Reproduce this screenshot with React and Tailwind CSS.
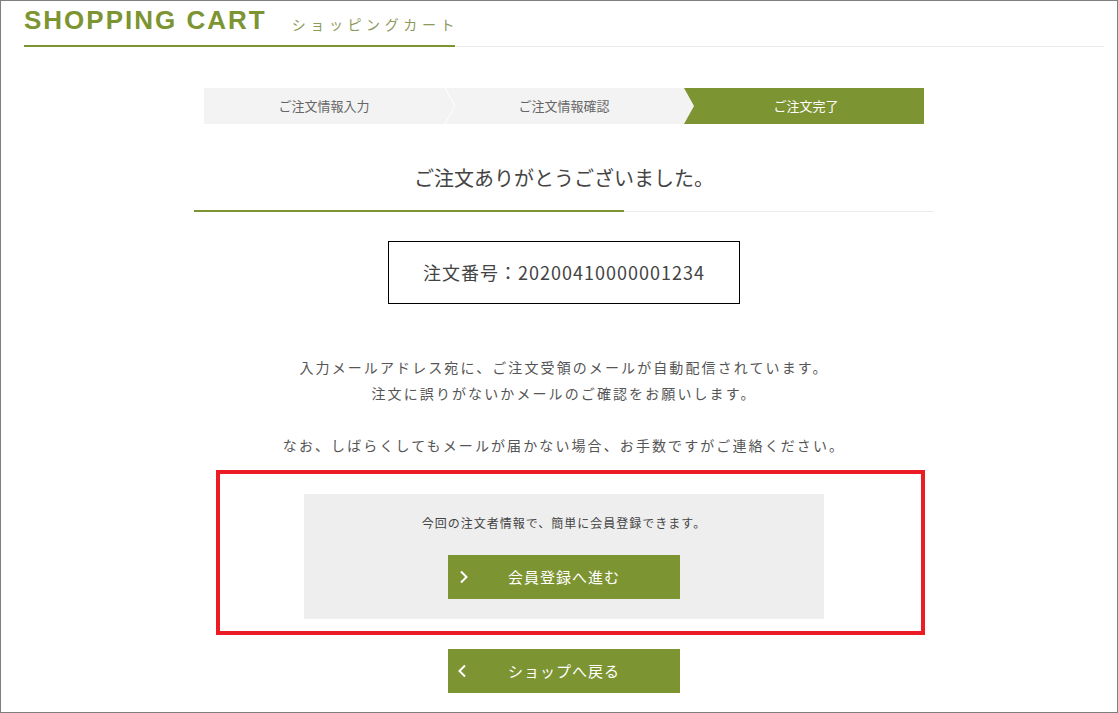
import React from "react";

const JP = { fontFamily: '"Noto Sans CJK JP", "Noto Sans", sans-serif' };

function Chevron({ dir = "right" }) {
  return (
    <svg width="10" height="14" viewBox="0 0 10 14" className="shrink-0">
      {dir === "right" ? (
        <polyline points="2,1.5 7.5,7 2,12.5" fill="none" stroke="#fff" strokeWidth="2" />
      ) : (
        <polyline points="8,1.5 2.5,7 8,12.5" fill="none" stroke="#fff" strokeWidth="2" />
      )}
    </svg>
  );
}

function GreenButton({ dir, children }) {
  return (
    <div className="relative mx-auto flex h-[44px] w-[232px] items-center justify-center bg-[#7d9433]">
      <div className={`absolute top-1/2 -translate-y-1/2 ${dir === "right" ? "left-[11px]" : "left-[9px]"}`}>
        <Chevron dir={dir} />
      </div>
      <span className="text-[15px] tracking-[1px] text-white">{children}</span>
    </div>
  );
}

export default function App() {
  return (
    <div className="h-[713px] w-[1118px] overflow-hidden border border-[#7f7f7f] bg-white" style={JP}>
      {/* Header */}
      <div className="ml-[23px] mr-[13px]">
        <div className="mt-[4px] flex h-[30px] items-center">
          <span
            className="text-[26px] font-bold leading-[30px] tracking-[2px] text-[#7d9433]"
            style={{ fontFamily: '"Liberation Sans", Arial, sans-serif' }}
          >
            SHOPPING CART
          </span>
          <span className="ml-[25px] mt-[8px] text-[14px] leading-[20px] tracking-[4.6px] text-[#8c9a5c]">ショッピングカート</span>
        </div>
        <div className="mt-[10px] flex items-end">
          <div className="h-[2px] w-[431px] bg-[#7d9433]" />
          <div className="h-px flex-1 bg-[#ebebeb]" />
        </div>
      </div>

      {/* Main column */}
      <div className="ml-[193px] w-[740px]">
        {/* Stepper */}
        <div className="relative mx-[10px] mt-[41px] flex h-[36px] bg-[#f3f3f3]">
          <div className="flex w-[240px] items-center justify-center text-[13px] text-[#666]">ご注文情報入力</div>
          <div className="flex w-[240px] items-center justify-center text-[13px] text-[#666]">ご注文情報確認</div>
          <div
            className="flex w-[240px] items-center justify-center bg-[#7d9433] pl-[4px] text-[13px] text-white"
            style={{ clipPath: "polygon(0 0, 100% 0, 100% 100%, 0 100%, 10px 50%)" }}
          >
            ご注文完了
          </div>
          <svg className="absolute left-[240px] top-0" width="14" height="36" viewBox="0 0 14 36">
            <polyline points="1,0 11,18 1,36" fill="none" stroke="#fff" strokeWidth="1" />
          </svg>
        </div>

        {/* Title */}
        <div className="mt-[39px] text-center text-[20px] leading-[30px] text-[#444]">ご注文ありがとうございました。</div>
        <div className="mt-[17px] flex items-end">
          <div className="h-[2px] w-[430px] bg-[#7d9433]" />
          <div className="h-px flex-1 bg-[#ebebeb]" />
        </div>

        {/* Order number */}
        <div className="mx-auto mt-[29px] flex h-[63px] w-[352px] items-center justify-center border border-black text-[18px] tracking-[1px] text-[#444]">
          注文番号：20200410000001234
        </div>

        {/* Message */}
        <div className="mt-[50px] text-center text-[14px] leading-[26px] tracking-[2.1px] text-[#555]">
          <p>入力メールアドレス宛に、ご注文受領のメールが自動配信されています。</p>
          <p>注文に誤りがないかメールのご確認をお願いします。</p>
          <p>&nbsp;</p>
          <p>なお、しばらくしてもメールが届かない場合、お手数ですがご連絡ください。</p>
        </div>

        {/* Red annotated box */}
        <div className="ml-[22px] mt-[12px] w-[709px] border-4 border-[#ec1c24] pb-[12px] pt-[20px]">
          <div className="ml-[84px] w-[520px] bg-[#eeeeee] pb-[20px] pt-[20px]">
            <div className="text-center text-[12px] leading-[18px] tracking-[1px] text-[#444]">
              今回の注文者情報で、簡単に会員登録できます。
            </div>
            <div className="mt-[23px]">
              <GreenButton dir="right">会員登録へ進む</GreenButton>
            </div>
          </div>
        </div>

        {/* Back */}
        <div className="mt-[14px]">
          <GreenButton dir="left">ショップへ戻る</GreenButton>
        </div>
      </div>
    </div>
  );
}
